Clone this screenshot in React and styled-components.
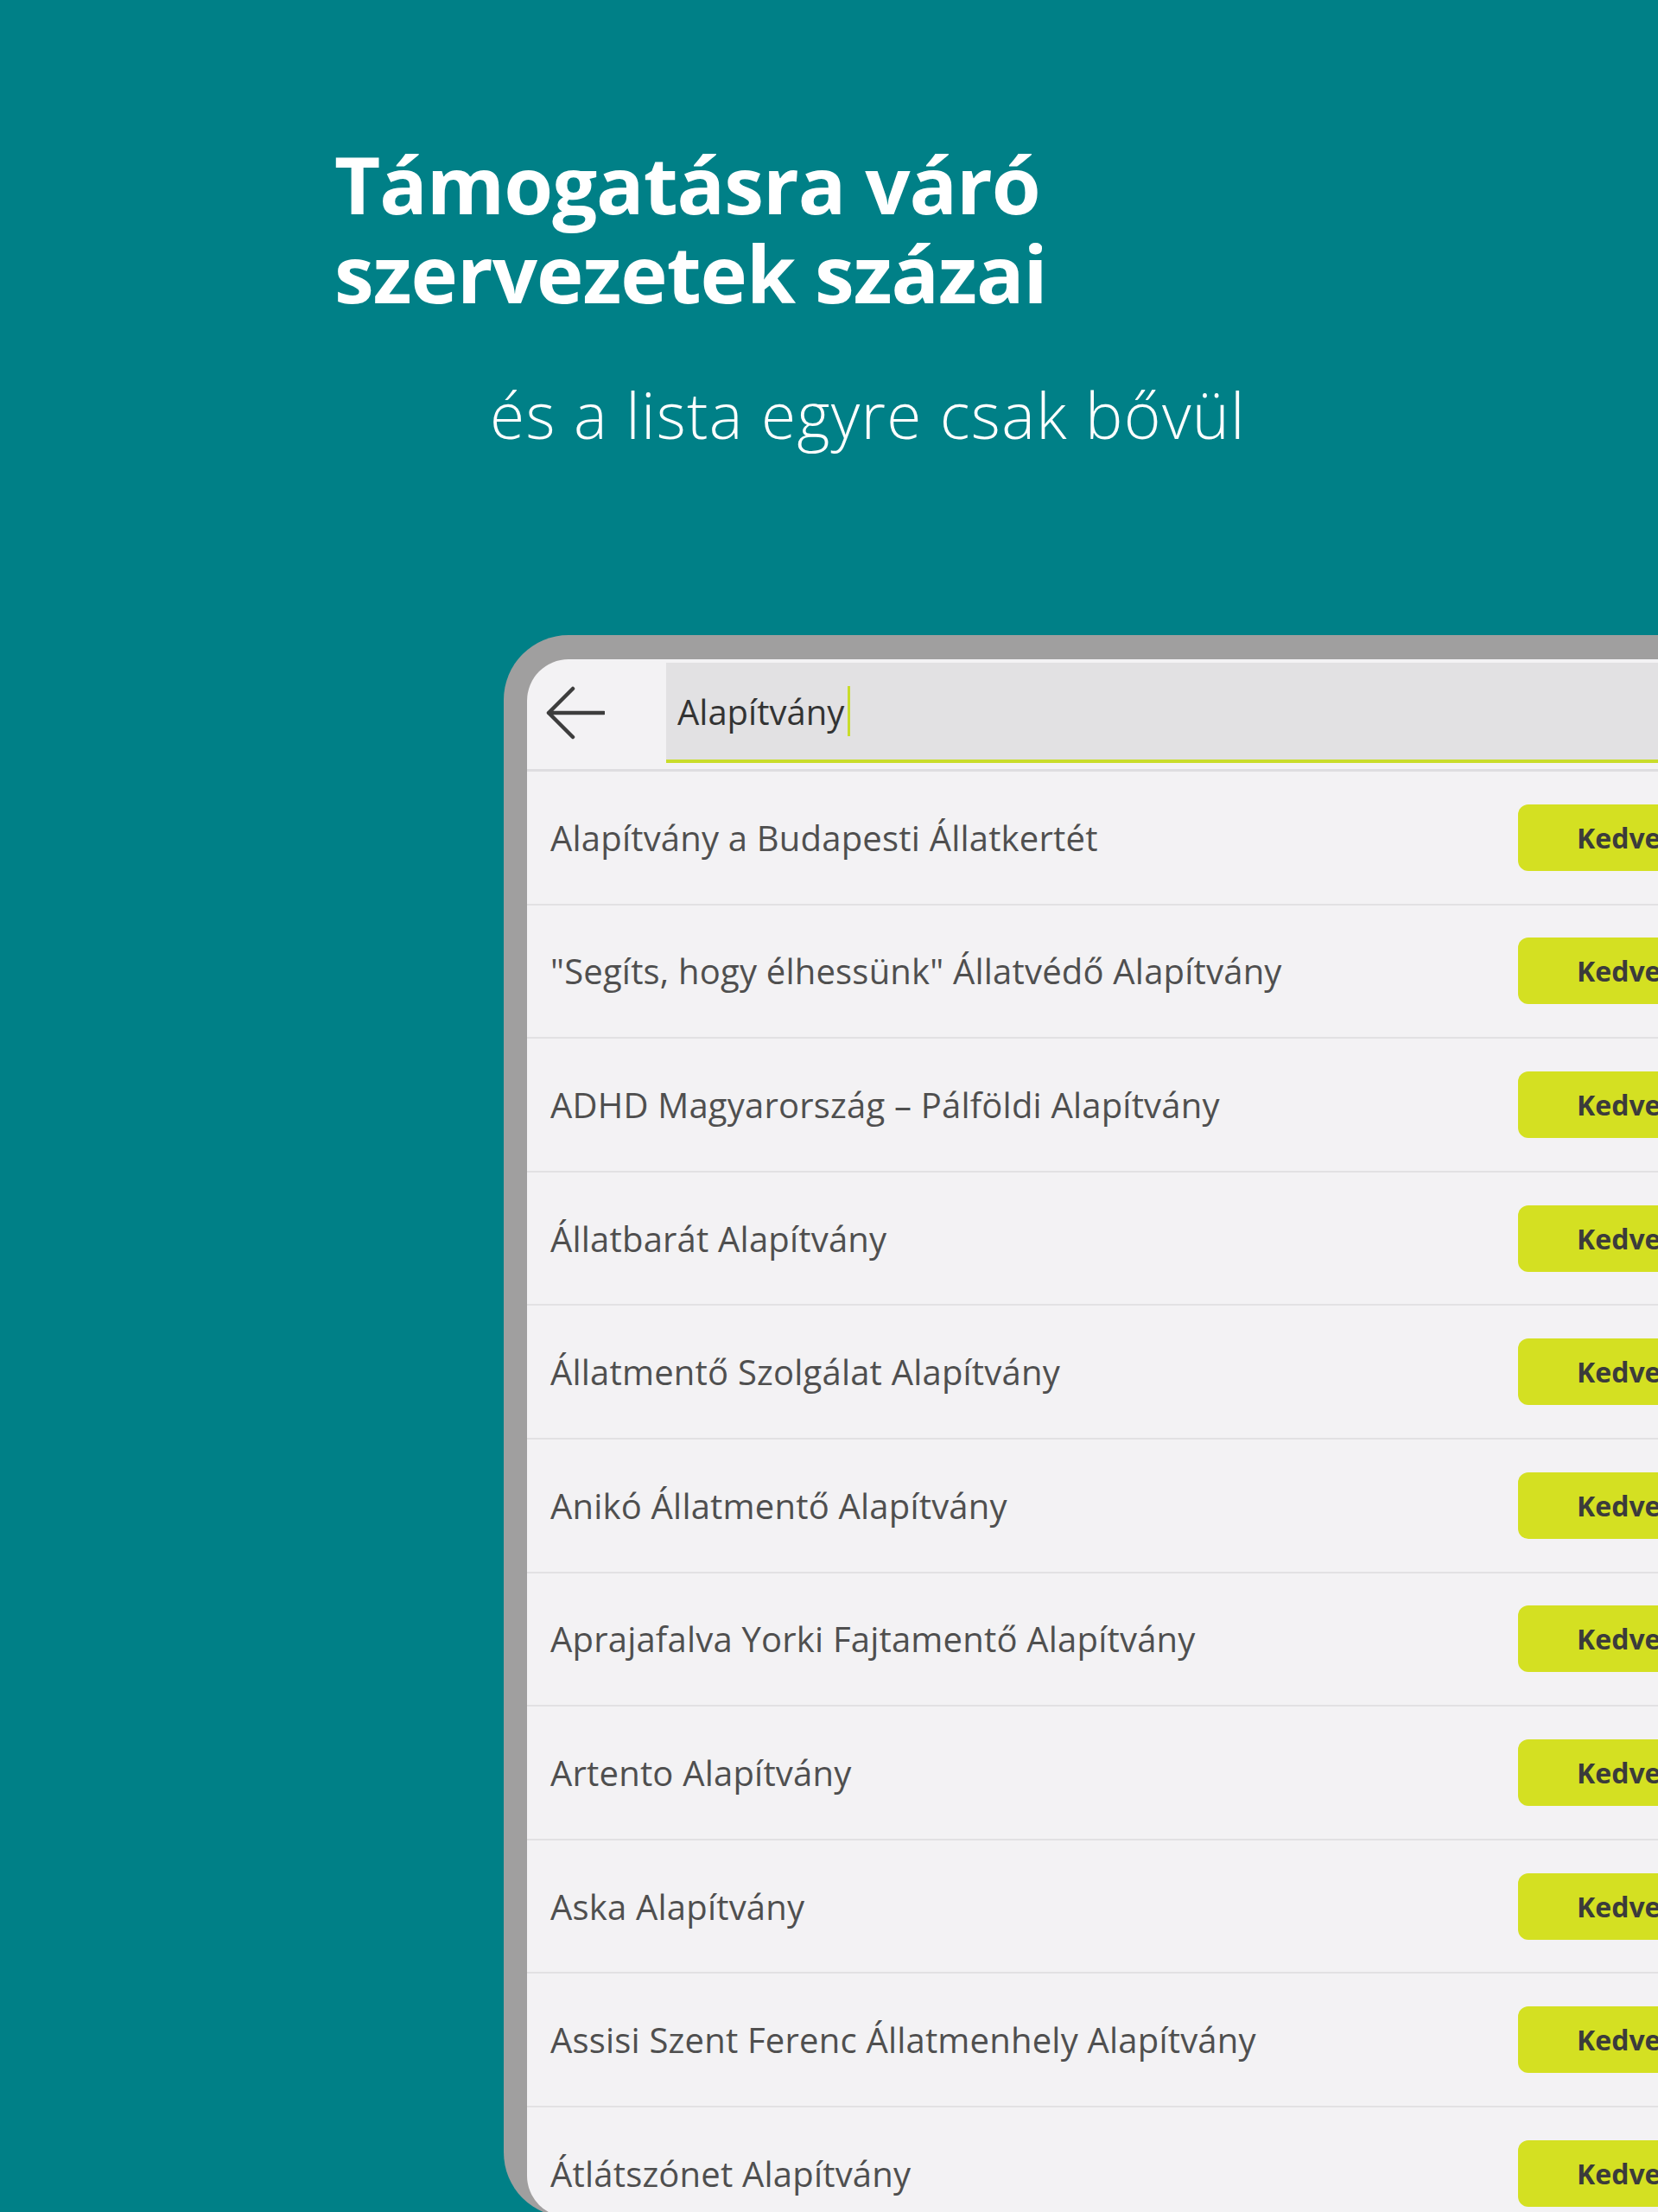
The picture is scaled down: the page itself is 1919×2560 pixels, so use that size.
import React from 'react'
import styled, { createGlobalStyle } from 'styled-components';

const GlobalStyle = createGlobalStyle`
html, body {
  margin: 0;
  padding: 0;
  overflow: hidden;
  background: #008087;
}
* {
  box-sizing: border-box;
}
`;

const Page = styled.div`
width: 100%;
height: 2560px;
overflow: hidden;
background: #008087;
font-family: "Open Sans", "Noto Sans", sans-serif;
padding-top: 161px;
`;

const Title = styled.h1`
margin: 0 0 0 387px;
color: #ffffff;
font-size: 92px;
font-weight: 700;
line-height: 103px;
letter-spacing: -1px;
`;

const Subtitle = styled.p`
margin: 77px 0 0 567px;
color: #ffffff;
font-size: 73px;
font-weight: 300;
line-height: 72px;
letter-spacing: 1.3px;
`;

const Device = styled.div`
margin: 219px 0 0 583px;
width: 1600px;
padding: 28px 0 0 27px;
background: #a09f9f;
border-radius: 75px 0 0 75px;
`;

const Screen = styled.div`
background: #f3f2f4;
border-radius: 48px 0 0 48px;
overflow: hidden;
height: 1803px;
`;

const Header = styled.div`
display: flex;
align-items: flex-start;
height: 130px;
padding-top: 4px;
border-bottom: 3px solid #dedde0;
`;

const BackButton = styled.div`
display: flex;
align-items: center;
justify-content: flex-start;
width: 161px;
height: 115px;
padding-left: 22px;
color: #3d3d3d;
`;

const SearchField = styled.div`
flex: 1;
display: flex;
align-items: center;
height: 116px;
padding-left: 13px;
background: #e2e1e3;
border-bottom: 4px solid #c9dc2b;
font-size: 40px;
color: #333333;
`;

const Caret = styled.span`
display: inline-block;
width: 3px;
height: 58px;
margin-left: 4px;
background: #c9dc2b;
`;

const Row = styled.div`
display: grid;
grid-template-columns: 1120px 1fr;
align-items: center;
height: 154.6px;
padding-left: 27px;
border-bottom: 2px solid #e2e1e3;
`;

const Name = styled.span`
font-size: 40px;
font-weight: 400;
letter-spacing: 0.2px;
color: #4f4f4f;
white-space: nowrap;
`;

const FavButton = styled.div`
width: 320px;
height: 77px;
display: flex;
align-items: center;
padding-left: 68px;
background: #d4e022;
border-radius: 12px;
font-size: 32px;
font-weight: 700;
color: #3b3b3b;
`;

const items = [
  'Alapítvány a Budapesti Állatkertét',
  '"Segíts, hogy élhessünk" Állatvédő Alapítvány',
  'ADHD Magyarország – Pálföldi Alapítvány',
  'Állatbarát Alapítvány',
  'Állatmentő Szolgálat Alapítvány',
  'Anikó Állatmentő Alapítvány',
  'Aprajafalva Yorki Fajtamentő Alapítvány',
  'Artento Alapítvány',
  'Aska Alapítvány',
  'Assisi Szent Ferenc Állatmenhely Alapítvány',
  'Átlátszónet Alapítvány',
];

const BackArrow = () => (
  <svg width="68" height="62" viewBox="0 0 68 62" fill="none">
    <path d="M3 31 H67 M31 3 L3 31 L31 59" stroke="currentColor" strokeWidth="4.5" strokeLinecap="round" strokeLinejoin="round" />
  </svg>
);

const App = () => {
  return (
    <Page>
      <GlobalStyle />
      <Title>
        Támogatásra váró
        <br />
        szervezetek százai
      </Title>
      <Subtitle>és a lista egyre csak bővül</Subtitle>
      <Device>
        <Screen>
          <Header>
            <BackButton>
              <BackArrow />
            </BackButton>
            <SearchField>
              Alapítvány
              <Caret />
            </SearchField>
          </Header>
          {items.map((name) => (
            <Row key={name}>
              <Name>{name}</Name>
              <FavButton>Kedvenc</FavButton>
            </Row>
          ))}
        </Screen>
      </Device>
    </Page>
  )
}

export default App;
